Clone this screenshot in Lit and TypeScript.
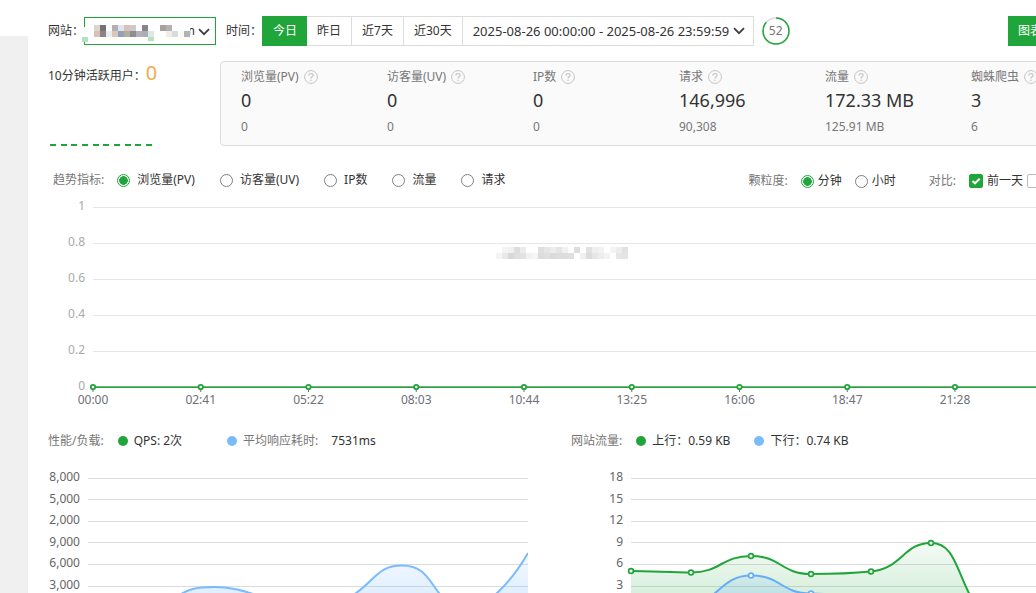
import { LitElement, html, css, svg } from "lit";
import { customElement, state } from "lit/decorators.js";

const METRICS = [
  { name: "浏览量(PV)", value: "0", previous: "0" },
  { name: "访客量(UV)", value: "0", previous: "0" },
  { name: "IP数", value: "0", previous: "0" },
  { name: "请求", value: "146,996", previous: "90,308" },
  { name: "流量", value: "172.33 MB", previous: "125.91 MB" },
  { name: "蜘蛛爬虫", value: "3", previous: "6" },
];
const RANGES = ["今日", "昨日", "近7天", "近30天"];
const TRENDS = ["浏览量(PV)", "访客量(UV)", "IP数", "流量", "请求"];
const TIMES = ["00:00", "02:41", "05:22", "08:03", "10:44", "13:25", "16:06", "18:47", "21:28"];
const TIME_STEP = 10.512;

// Masked site name: 6px blocks, two rows.
const SITE_MASK = [
  ["#d8d5d3", "#747274", "", "#b3b0b4", "#dfe5ee", "#d9c2bd", "#cccacd", "", "#868487", "", "", "#a9a09b", "#b3b1b4", "#fff", "#fff", "#fff"],
  ["#d9c2b5", "#8c828a", "#e8eeec", "#d9c8bb", "#93a2b4", "#b0ae9d", "#8f8c96", "#b3b1b8", "#acadb5", "#dfe6e6", "#fefef6", "#fff", "#f3ebe5", "#d6dddd", "#fafcf3", "#b4b2b5"],
];
const CHART_MASK = [
  ["", "#f4f4f4", "#f0f0f0", "#dedede", "#ececec", "", "", "#dfdfdf", "#e6e6e6", "#ececec", "#e4e4e4", "#f0f0f0", "", "#dedede", "", "#e0e0e0", "#eeeeee", "#f2f2f2", "", "#f4f4f4", "#ededed", "#e2e2e2"],
  ["#f5f5f5", "#e9e9e9", "#d8d8d8", "#dfdfdf", "#e2e2e2", "#f1f1f1", "#f5f5f5", "#dcdcdc", "#dfdfdf", "#dadada", "#dcdcdc", "#dddddd", "#dfdfdf", "", "#f0f0f0", "#dcdcdc", "#e6e6e6", "#ededed", "#f3f3f3", "", "#e6e6e6", "#e4e4e4"],
];
const blocks = (rows: string[][], x: number, y: number) =>
  rows.map((row, r) =>
    row.map((fill, c) => (fill ? svg`<rect x=${x + c * 6} y=${y + r * 6} width="6" height="6" fill=${fill}></rect>` : "")),
  );

const chevron = html`<svg class="chevron" width="12" height="8" viewBox="0 0 12 8" aria-hidden="true">
  <path d="M1 1.2 6 6.2 11 1.2" fill="none" stroke="#3c3c3c" stroke-width="1.7" />
</svg>`;

@customElement("app-root")
export class AppRoot extends LitElement {
  @state() private range = 0;

  static styles = css`
    :host {
      display: grid;
      grid-template-columns: 28px minmax(0, 1fr);
      height: 100vh;
      overflow: hidden;
      background: #fff;
      color: #333;
      font: 12px/20px "Noto Sans", "Noto Sans CJK SC", sans-serif;
    }
    * { box-sizing: border-box; }
    svg { display: block; }
    button, input, select { font: inherit; color: inherit; margin: 0; }
    .rail { margin-top: 36px; background: #f0f0f0; }
    .page { padding: 16px 0 0 20px; margin-right: -82px; }

    .toolbar { display: flex; align-items: center; height: 30px; padding-right: 66px; }
    .site { position: relative; width: 132px; margin-right: 10px; }
    .site select {
      display: block; width: 100%; height: 28px; padding: 0 20px 0 0; border: 1px solid #20a53a;
      border-radius: 0; background: #fff; appearance: none; text-align: right; text-align-last: right;
    }
    .site .chevron { position: absolute; right: 6px; top: 11px; pointer-events: none; }
    .site-mask { position: absolute; left: -2px; top: 0; pointer-events: none; }
    .ranges { display: flex; }
    .range {
      height: 30px; padding: 0 10px; border: 1px solid #dcdcdc; border-left: 0; background: #fff; cursor: pointer;
    }
    .range.first { padding-left: 11px; border-right: 0; }
    .range.on { background: #20a53a; border-color: #20a53a; color: #fff; }
    .dates { position: relative; width: 291px; }
    .dates input {
      display: block; width: 100%; height: 30px; padding: 0 22px 0 10px; border: 1px solid #dcdcdc; border-left: 0;
      background: #fff; outline: 0; font-size: 13px;
    }
    .dates .chevron { position: absolute; right: 9px; top: 11px; pointer-events: none; }
    .countdown { display: grid; place-items: center; width: 28px; height: 28px; margin-left: 8px; color: #777; }
    .countdown > * { grid-area: 1 / 1; }
    .primary { height: 30px; margin-left: auto; padding: 0 10px; border: 0; background: #20a53a; color: #fff; }

    .overview { display: grid; grid-template-columns: 172px minmax(0, 1fr); margin-top: 15px; }
    .live { display: flex; flex-direction: column; justify-content: space-between; }
    .live-line { display: flex; align-items: center; height: 30px; }
    .live-count { align-self: flex-start; line-height: 24px; color: #f0ad4e; font-size: 20px; }
    .live-bars { display: flex; justify-content: space-between; width: 102px; margin-left: 2px; }
    .live-bars span { width: 6px; height: 2px; background: #20a53a; }
    .metrics {
      display: grid; grid-template-columns: repeat(6, minmax(0, 1fr)); padding: 5px 0 8px 20px;
      border: 1px solid #ddd; border-radius: 4px; background: #fafafa;
    }
    .metric-name { display: flex; align-items: center; gap: 5px; color: #777; }
    .metric-value { font-size: 18px; line-height: 26px; }
    .metric-previous { margin-top: 4px; color: #777; }

    .filters { display: flex; justify-content: space-between; margin-top: 24px; padding: 0 64px 0 5px; }
    .group { display: flex; align-items: center; height: 20px; }
    .group.fine { margin-top: 1px; }
    .caption { color: #777; margin-right: 13px; }
    .choice { display: flex; align-items: center; gap: 7px; margin-right: 25px; }
    .fine .choice { gap: 4px; margin-right: 13px; }
    .fine .choice.last { margin-right: 33px; }
    .fine .choice.tight { margin-right: 4px; }
    .choice input { appearance: none; flex: none; width: 13px; height: 13px; border: 1px solid #808080; border-radius: 50%; background: #fff; }
    .choice input[type="radio"]:checked { border-color: #20a53a; background: radial-gradient(circle, #20a53a 4px, #fff 4.6px); }
    .choice input[type="checkbox"] { width: 14px; height: 14px; border-color: #bbb; border-radius: 2px; }
    .choice input[type="checkbox"]:checked { border-color: #20a53a; background: #20a53a; }
    .box { display: grid; }
    .box > * { grid-area: 1 / 1; pointer-events: none; }
    .box > input { pointer-events: auto; }

    .trend { position: relative; display: grid; grid-template-columns: 45px minmax(0, 1fr); height: 210px; margin-top: 6px; }
    .plot { width: 100%; height: 100%; overflow: visible; }
    .curves { overflow: visible; }
    .axis { overflow: visible; width: 100%; height: 100%; }
    .trend .axis text { fill: #aaa; }
    .times { fill: #6e7079; }
    .trend-mask { position: absolute; left: 448px; top: 49px; }

    .loads { display: grid; grid-template-columns: 523fr 547fr; margin-top: 24px; }
    .legend { display: flex; align-items: center; height: 20px; }
    .dot { width: 10px; height: 10px; margin-right: 6px; border-radius: 50%; background: #20a53a; }
    .dot.blue { background: #7abaff; }
    .legend .caption { margin-right: 14px; }
    .item-a { margin-right: 45px; }
    .item-b { margin-right: 13px; color: #777; }
    .item-c { margin-right: 24px; }
    .chart { display: grid; height: 150px; margin-top: 19px; }
    .load .chart { grid-template-columns: 40px minmax(0, 1fr); padding-right: 43px; }
    .traffic .chart { grid-template-columns: 60px minmax(0, 1fr); }
    .chart text { fill: #666; }
  `;

  private renderAxis(labels: string[], right: number, top: number, step: number) {
    return html`<svg class="axis">
      ${labels.map((t, i) => svg`<text x=${right} y=${Math.round(top + i * step)} text-anchor="end">${t}</text>`)}
    </svg>`;
  }

  private renderGrid(count: number, top: number, step: number, color: string) {
    return Array.from({ length: count }, (_, i) => {
      const y = Math.floor(top + i * step) + 0.5;
      return svg`<line x1="0" x2="100%" y1=${y} y2=${y} stroke=${color}></line>`;
    });
  }

  private renderTrend() {
    return html`<section class="trend">
      ${this.renderAxis(["1", "0.8", "0.6", "0.4", "0.2", "0"], 37, 13, 36)}
      <svg class="plot">
        ${this.renderGrid(5, 10, 36, "#e6e6e6")}
        <line x1="0" x2="100%" y1="190.5" y2="190.5" stroke="#6e7079"></line>
        <line x1="0" x2="100%" y1="190" y2="190" stroke="#20a53a" stroke-width="2" opacity=".7"></line>
        ${TIMES.map((t, i) => {
          const x = `${i * TIME_STEP}%`;
          return svg`<line x1=${x} x2=${x} y1="190" y2="195" stroke="#6e7079"></line>
            <circle cx=${x} cy="190" r="2.2" fill="#fff" stroke="#20a53a" stroke-width="1.8"></circle>
            <text class="times" x=${x} y="207" text-anchor="middle">${t}</text>`;
        })}
      </svg>
      <svg class="trend-mask" width="134" height="16" aria-hidden="true">${blocks(CHART_MASK, 0, 1)}</svg>
    </section>`;
  }

  private renderLoad() {
    const line = "M84 130C100 118 109 117 126 117C145 117 155 121 172 126S240 141 268 123C287 110 290 95.500 314 95.500C338 95.500 341 112 355 128C376 143 394 139 409 123C423 110 432 97 440 83";
    return html`<div class="load">
      <div class="legend">
        <span class="caption">性能/负载:</span>
        <span class="dot"></span><span class="item-a">QPS: 2次</span>
        <span class="dot blue"></span><span class="item-b">平均响应耗时:</span><span>7531ms</span>
      </div>
      <div class="chart">
        ${this.renderAxis(["8,000", "5,000", "2,000", "9,000", "6,000", "3,000"], 32, 11, 21.6)}
        <svg class="plot">
          <defs><linearGradient id="sky" gradientUnits="userSpaceOnUse" x1="0" x2="0" y1="83" y2="150">
            <stop offset="0" stop-color="#7abaff" stop-opacity=".08"></stop>
            <stop offset="1" stop-color="#7abaff" stop-opacity=".34"></stop>
          </linearGradient></defs>
          ${this.renderGrid(6, 8, 21.6, "#dcdcdc")}
          <svg width="100%" height="150" viewBox="0 0 440 150" preserveAspectRatio="none">
            <path d="${line}V150H84Z" fill="url(#sky)"></path>
            <path d=${line} fill="none" stroke="#7abaff" stroke-width="2"></path>
          </svg>
        </svg>
      </div>
    </div>`;
  }

  private renderTraffic() {
    const up = "M0 101C20 101 40 102.500 60 102.500C90 102.500 90 86 120 86C150 86 150 104 180 104C205 104 220 103.500 240 101.500C272 98 272 73 300 73C324 73 325 101 342 131";
    const down = "M60 136C88 130 90 105.500 120 105.500C150 105.500 150 123.500 180 123.500C205 123.500 220 128 240 134";
    const upPoints = [[0, 101], [60, 102.5], [120, 86], [180, 104], [240, 101.5], [300, 73]];
    const downPoints = [[120, 105.5], [180, 123.5]];
    return html`<div class="traffic">
      <div class="legend">
        <span class="caption">网站流量:</span>
        <span class="dot"></span><span class="item-c">上行：0.59 KB</span>
        <span class="dot blue"></span><span>下行：0.74 KB</span>
      </div>
      <div class="chart">
        ${this.renderAxis(["18", "15", "12", "9", "6", "3"], 52, 11, 21.6)}
        <svg class="plot">
          <defs>
            <linearGradient id="leaf" gradientUnits="userSpaceOnUse" x1="0" x2="0" y1="73" y2="150">
              <stop offset="0" stop-color="#20a53a" stop-opacity=".05"></stop>
              <stop offset="1" stop-color="#20a53a" stop-opacity=".24"></stop>
            </linearGradient>
            <linearGradient id="sea" gradientUnits="userSpaceOnUse" x1="0" x2="0" y1="100" y2="150">
              <stop offset="0" stop-color="#7abaff" stop-opacity=".12"></stop>
              <stop offset="1" stop-color="#7abaff" stop-opacity=".4"></stop>
            </linearGradient>
          </defs>
          ${this.renderGrid(6, 8, 21.6, "#dcdcdc")}
          <svg class="curves" width="100%" height="150" viewBox="0 0 487 150" preserveAspectRatio="none">
            <path d="${up}V150H0Z" fill="url(#leaf)"></path>
            <path d="${down}V150H60Z" fill="url(#sea)"></path>
            <path d=${down} fill="none" stroke="#66adf8" stroke-width="2"></path>
            <path d=${up} fill="none" stroke="#20a53a" stroke-width="2"></path>
            ${downPoints.map(([x, y]) => svg`<circle cx=${x} cy=${y} r="2.4" fill="#fff" stroke="#66adf8" stroke-width="1.7"></circle>`)}
            ${upPoints.map(([x, y]) => svg`<circle cx=${x} cy=${y} r="2.4" fill="#fff" stroke="#20a53a" stroke-width="1.7"></circle>`)}
          </svg>
        </svg>
      </div>
    </div>`;
  }

  render() {
    return html`
      <aside class="rail"></aside>
      <main class="page">
        <header class="toolbar">
          <label for="site">网站：</label>
          <div class="site">
            <select id="site"><option>m</option></select>
            ${chevron}
            <svg class="site-mask" width="112" height="28" aria-hidden="true">
              <rect x="1" y="10" width="4" height="10" fill="#fff"></rect>
              ${blocks(SITE_MASK, 12, 8)}
              <rect x="0" y="20" width="6" height="5" fill="#b5e2c0"></rect>
              <rect x="66" y="20" width="6" height="4" fill="#b5e2c0"></rect>
            </svg>
          </div>
          <label for="dates">时间：</label>
          <div class="ranges">
            ${RANGES.map((r, i) => html`<button
              class="range ${i === 0 ? "first" : ""} ${i === this.range ? "on" : ""}"
              @click=${() => (this.range = i)}>${r}</button>`)}
          </div>
          <div class="dates">
            <input id="dates" type="text" readonly value="2025-08-26 00:00:00 - 2025-08-26 23:59:59" />
            ${chevron}
          </div>
          <div class="countdown">
            <svg width="28" height="28" viewBox="0 0 28 28" aria-hidden="true">
              <circle cx="14" cy="14" r="13" fill="none" stroke="#ddd" stroke-width="1.5"></circle>
              <circle cx="14" cy="14" r="13" fill="none" stroke="#20a53a" stroke-width="1.5" pathLength="60" stroke-dasharray="52 8" transform="rotate(-90 14 14)"></circle>
            </svg>
            <span>52</span>
          </div>
          <button class="primary">图表</button>
        </header>

        <section class="overview">
          <div class="live">
            <div class="live-line"><span>10分钟活跃用户：</span><span class="live-count">0</span></div>
            <div class="live-bars">${Array.from({ length: 10 }, () => html`<span></span>`)}</div>
          </div>
          <div class="metrics">
            ${METRICS.map((m) => html`<div>
              <div class="metric-name">${m.name}
                <svg width="14" height="14" viewBox="0 0 14 14" fill="none" stroke="#c4c4c4" aria-hidden="true">
                  <circle cx="7" cy="7" r="6.4"></circle>
                  <path d="M4.900 5.500C4.900 4.200 5.800 3.500 7 3.500S9.100 4.200 9.100 5.300C9.100 6.700 7 6.800 7 8.500M7 9.700V10.900" stroke-width="1.2"></path>
                </svg>
              </div>
              <div class="metric-value">${m.value}</div>
              <div class="metric-previous">${m.previous}</div>
            </div>`)}
          </div>
        </section>

        <section class="filters">
          <div class="group">
            <span class="caption">趋势指标:</span>
            ${TRENDS.map((t, i) => html`<label class="choice"><input type="radio" name="trend" ?checked=${i === 0} />${t}</label>`)}
          </div>
          <div class="group fine">
            <span class="caption">颗粒度:</span>
            <label class="choice"><input type="radio" name="grain" checked />分钟</label>
            <label class="choice last"><input type="radio" name="grain" />小时</label>
            <span class="caption">对比:</span>
            <label class="choice tight">
              <span class="box"><input type="checkbox" checked />
                <svg width="14" height="14" viewBox="0 0 14 14" aria-hidden="true"><path d="M3.500 7 6 9.300 10.700 4.700" fill="none" stroke="#fff" stroke-width="2"></path></svg>
              </span>前一天</label>
            <span class="choice"><input type="checkbox" aria-label="对比" /></span>
          </div>
        </section>

        ${this.renderTrend()}
        <section class="loads">${this.renderLoad()}${this.renderTraffic()}</section>
      </main>
    `;
  }
}
